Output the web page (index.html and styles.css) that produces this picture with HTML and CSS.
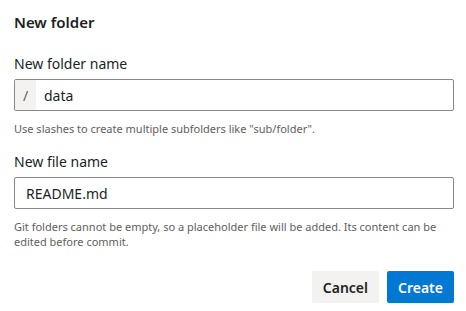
FILE: index.html
```html
<!DOCTYPE html>
<html lang="en">
<head>
    <meta charset="UTF-8">
    <title>New folder</title>
    <link rel="stylesheet" href="styles.css">
</head>
<body>
    <div class="dialog">
        <h1 class="dialog-title">New folder</h1>

        <div class="field">
            <label class="field-label">New folder name</label>
            <div class="text-box">
                <span class="prefix">/</span>
                <span class="value">data</span>
            </div>
            <p class="hint">Use slashes to create multiple subfolders like "sub/folder".</p>
        </div>

        <div class="field">
            <label class="field-label">New file name</label>
            <div class="text-box">
                <span class="value">README.md</span>
            </div>
            <p class="hint">Git folders cannot be empty, so a placeholder file will be added. Its content can be edited before commit.</p>
        </div>

        <div class="actions">
            <button class="btn">Cancel</button>
            <button class="btn btn-primary">Create</button>
        </div>
    </div>
</body>
</html>
```

FILE: styles.css
```css
* {
    margin: 0;
    padding: 0;
    box-sizing: border-box;
}

body {
    font-family: 'Noto Sans', sans-serif;
    color: #201f1e;
    background-color: #ffffff;
}

.dialog {
    width: 466px;
    padding: 12px 12px 0 14px;
}

.dialog-title {
    font-size: 15px;
    font-weight: 600;
    line-height: 20px;
    margin-bottom: 22px;
}

.field {
    margin-bottom: 16px;
}

.field-label {
    display: block;
    font-size: 14px;
    line-height: 20px;
    margin-bottom: 5px;
}

.text-box {
    display: flex;
    align-items: stretch;
    height: 32px;
    border: 1px solid #8a8886;
    border-radius: 2px;
    font-size: 14px;
}

.prefix {
    display: flex;
    align-items: center;
    justify-content: center;
    width: 21px;
    background-color: #f3f2f1;
    color: #605e5c;
}

.value {
    display: flex;
    align-items: center;
    padding: 0 8px;
}

.text-box .value:first-child {
    padding-left: 11px;
}

.hint {
    font-size: 11px;
    line-height: 15px;
    color: #605e5c;
    padding-top: 10px;
}

.actions {
    display: flex;
    justify-content: flex-end;
    gap: 8px;
    margin-top: 22px;
}

.btn {
    height: 32px;
    padding: 0 11px;
    border: none;
    border-radius: 2px;
    background-color: #f3f2f1;
    color: #201f1e;
    font-family: inherit;
    font-size: 14px;
    font-weight: 600;
}

.btn-primary {
    background-color: #0078d4;
    color: #ffffff;
}
```
